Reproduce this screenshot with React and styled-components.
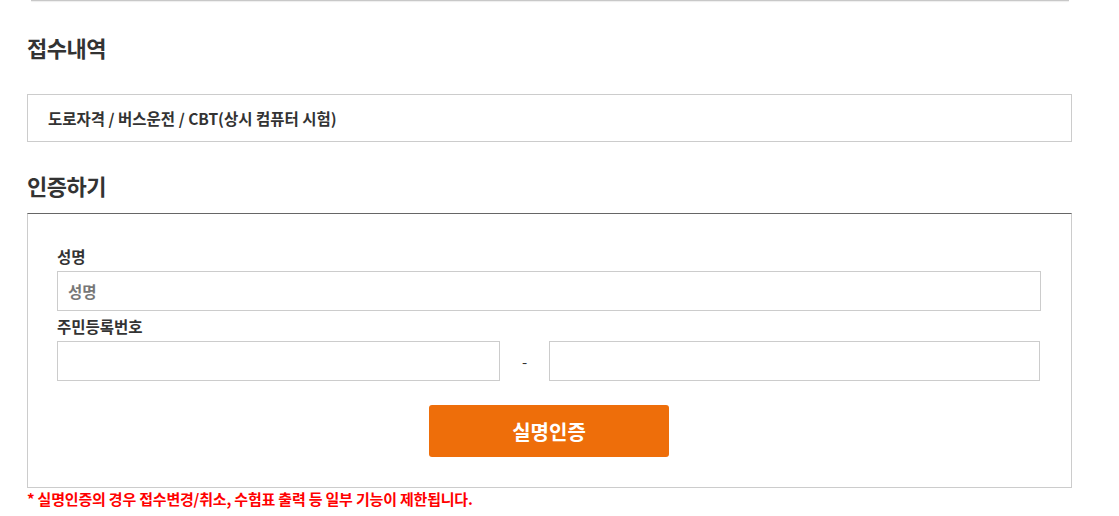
import React from 'react'
import styled, { createGlobalStyle } from 'styled-components'

const GlobalStyle = createGlobalStyle`
  body {
    margin: 0;
    background: #fff;
    font-family: 'Noto Sans CJK KR', 'Noto Sans', sans-serif;
    color: #333;
  }
`

const Page = styled.div`
  width: 1045px;
  padding-left: 27px;
`

const TopRule = styled.div`
  height: 1px;
  margin: 0 3px 0 4px;
  background: #c8c8c8;
  box-shadow: 0 1px 1px rgba(0, 0, 0, 0.08);
`

const Heading = styled.h2`
  margin: ${(p) => p.$top}px 0 ${(p) => p.$bottom}px;
  font-size: 22px;
  line-height: 32px;
  font-weight: 700;
  color: #333;
  letter-spacing: -0.5px;
`

const InfoBox = styled.div`
  height: 46px;
  display: flex;
  align-items: center;
  padding-left: 20px;
  border: 1px solid #ccc;
  font-size: 15.5px;
  font-weight: 700;
`

const AuthBox = styled.div`
  border: 1px solid #ccc;
  border-top-color: #666;
  padding: 32px 30px 30px 29px;
`

const Label = styled.div`
  font-size: 15.5px;
  line-height: 20px;
  font-weight: 700;
  margin: ${(p) => p.$top || 0}px 0 5px;
`

const Field = styled.input`
  box-sizing: border-box;
  width: 100%;
  height: 40px;
  border: 1px solid #ccc;
  padding: 0 10px;
  font-family: inherit;
  font-size: 15.5px;
  font-weight: 700;
  color: #333;
  outline: none;

  &::placeholder {
    color: #777;
  }
`

const IdRow = styled.div`
  display: grid;
  grid-template-columns: 443px 49px 1fr;
  padding-right: 1px;
  align-items: center;
`

const Dash = styled.span`
  text-align: center;
  font-size: 15px;
  color: #333;
`

const ButtonRow = styled.div`
  display: flex;
  justify-content: center;
  margin-top: 24px;
`

const ConfirmButton = styled.button`
  width: 240px;
  height: 52px;
  border: 0;
  border-radius: 3px;
  background: #ee6e0a;
  color: #fff;
  font-family: inherit;
  font-size: 20px;
  font-weight: 700;
  cursor: pointer;
`

const Notice = styled.p`
  margin: 1px 0 0;
  font-size: 15px;
  line-height: 20px;
  font-weight: 700;
  color: #f00;
  letter-spacing: -0.2px;
`

export default function App() {
  return (
    <>
      <GlobalStyle />
      <Page>
        <TopRule />
        <Heading $top={30} $bottom={31}>접수내역</Heading>
        <InfoBox>도로자격 / 버스운전 / CBT(상시 컴퓨터 시험)</InfoBox>
        <Heading $top={27} $bottom={12}>인증하기</Heading>
        <AuthBox>
          <Label>성명</Label>
          <Field placeholder='성명' />
          <Label $top={5}>주민등록번호</Label>
          <IdRow>
            <Field />
            <Dash>-</Dash>
            <Field />
          </IdRow>
          <ButtonRow>
            <ConfirmButton>실명인증</ConfirmButton>
          </ButtonRow>
        </AuthBox>
        <Notice>* 실명인증의 경우 접수변경/취소, 수험표 출력 등 일부 기능이 제한됩니다.</Notice>
      </Page>
    </>
  )
}
